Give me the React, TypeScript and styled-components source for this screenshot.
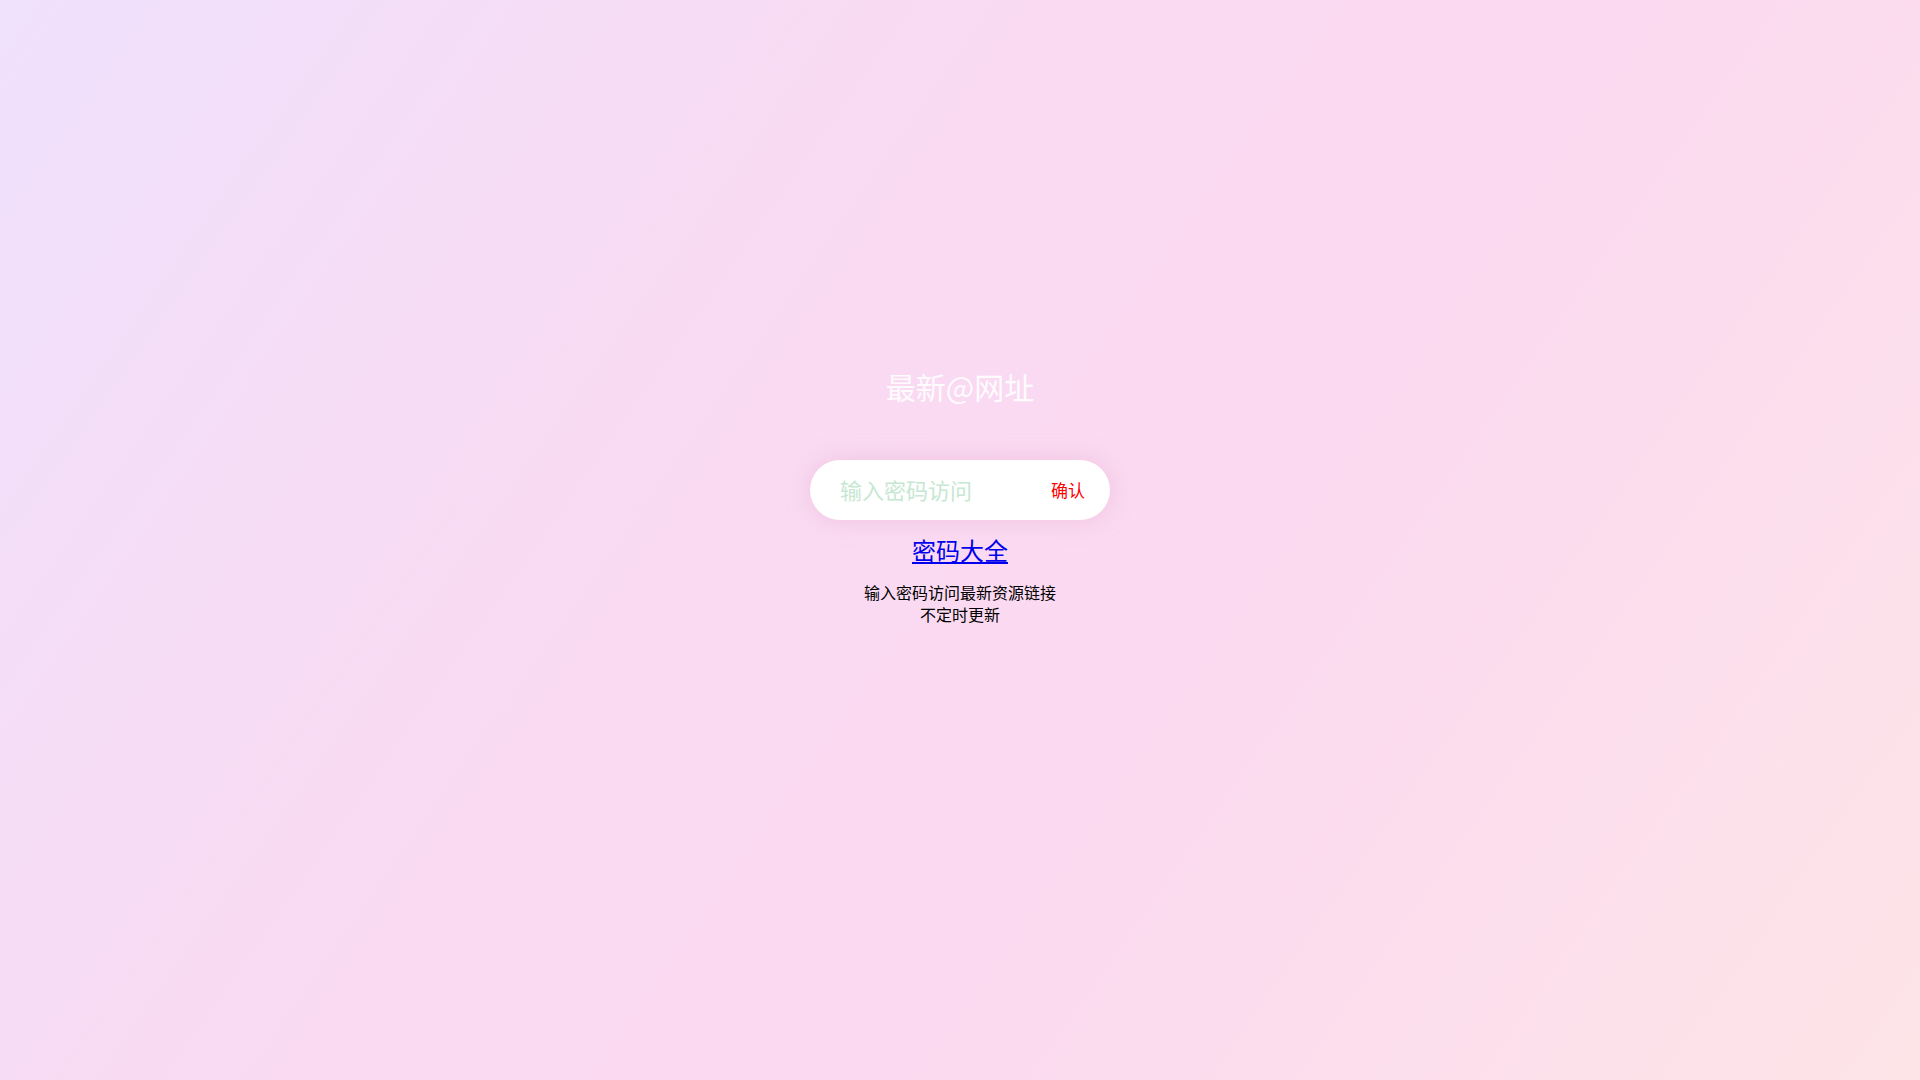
import * as React from 'react';
import styled, { createGlobalStyle } from 'styled-components';

const GlobalStyle = createGlobalStyle`
  html, body {
    margin: 0;
    padding: 0;
  }
  body {
    font-family: "Noto Sans CJK SC", "Noto Sans", sans-serif;
    background: linear-gradient(125deg, #f0e1fc 0%, #f9dbf3 35%, #fbd9f1 60%, #fde4e7 100%);
    min-height: 100vh;
  }
`;

const Page = styled.main`
  min-height: 100vh;
  display: flex;
  flex-direction: column;
  align-items: center;
  padding-top: 366px;
  box-sizing: border-box;
`;

const Title = styled.h1`
  margin: 0 0 54px;
  font-size: 30px;
  line-height: 40px;
  font-weight: 400;
  color: rgba(255, 255, 255, 0.92);
`;

const SearchBar = styled.form`
  width: 300px;
  height: 60px;
  display: flex;
  align-items: center;
  justify-content: space-between;
  padding: 0 25px 0 30px;
  box-sizing: border-box;
  background: #fff;
  border-radius: 30px;
  box-shadow: 0 0 22px rgba(232, 176, 208, 0.55);
`;

const PasswordInput = styled.input`
  flex: 1;
  min-width: 0;
  border: none;
  outline: none;
  background: transparent;
  font-family: inherit;
  font-size: 22px;
  color: #333;
  padding: 0 0 3px;
  &::placeholder {
    color: #c6e7d2;
  }
`;

const ConfirmButton = styled.button`
  border: none;
  background: transparent;
  padding: 0 0 2px;
  font-family: inherit;
  font-size: 17px;
  color: #ff0000;
  cursor: pointer;
`;

const DirectoryLink = styled.a`
  margin-top: 14px;
  font-size: 24px;
  line-height: 32px;
  color: #0000ee;
  text-decoration: underline;
`;

const Notice = styled.p`
  margin: 15px 0 0;
  font-size: 16px;
  line-height: 22px;
  color: #000;
  text-align: center;
`;

const App: React.FC = () => {
  const [value, setValue] = React.useState('');

  return (
    <>
      <GlobalStyle />
      <Page>
        <Title>最新@网址</Title>
        <SearchBar onSubmit={(e) => e.preventDefault()}>
          <PasswordInput
            type="password"
            value={value}
            onChange={(e) => setValue(e.target.value)}
            placeholder="输入密码访问"
          />
          <ConfirmButton type="submit">确认</ConfirmButton>
        </SearchBar>
        <DirectoryLink href="#">密码大全</DirectoryLink>
        <Notice>
          输入密码访问最新资源链接
          <br />
          不定时更新
        </Notice>
      </Page>
    </>
  );
};

export default App;
